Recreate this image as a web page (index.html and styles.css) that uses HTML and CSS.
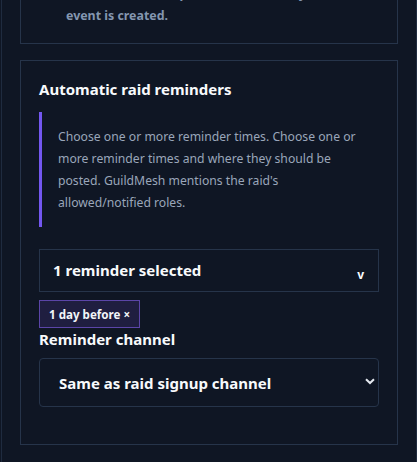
FILE: index.html
```html
<!DOCTYPE html>
<html lang="en">
<head>
<meta charset="utf-8">
<title>Raid reminders</title>
<link rel="stylesheet" href="styles.css">
</head>
<body>
<div class="panel">
  <section class="card card-top">
    <p class="hint">Leave unticked to publish immediately when the event is created.</p>
  </section>
  <section class="card card-main">
    <h3 class="title">Automatic raid reminders</h3>
    <blockquote class="note">Choose one or more reminder times. Choose one or more reminder times and where they should be posted. GuildMesh mentions the raid's allowed/notified roles.</blockquote>
    <div class="multiselect">
      <span class="ms-text">1 reminder selected</span>
      <span class="ms-caret">v</span>
    </div>
    <div class="chips">
      <span class="chip">1 day before ×</span>
    </div>
    <label class="label">Reminder channel</label>
    <div class="select">
      <span class="select-text">Same as raid signup channel</span>
      <svg class="chevron" width="10" height="7" viewBox="0 0 10 7"><path d="M1 1.2 L5 5 L9 1.2" fill="none" stroke="#e5e9f0" stroke-width="2"/></svg>
    </div>
  </section>
</div>
</body>
</html>
```
FILE: styles.css
```css
html, body {
  margin: 0;
  padding: 0;
  background: #0f1624;
  overflow: hidden;
}
body {
  font-family: "Noto Sans", "Open Sans", sans-serif;
  color: #f1f5f9;
}
.panel {
  display: flow-root;
  margin-left: 1px;
  width: 416px;
  box-sizing: border-box;
  height: 462px;
  border-left: 1px solid #1f2b3f;
  border-right: 1px solid #1f2b3f;
  padding: 0 18px;
}
.card {
  border: 1px solid #26344a;
  box-sizing: border-box;
  width: 378px;
}
.card-top {
  margin-top: -18px;
  padding: 0 18px 16px;
}
.hint {
  margin: 0 0 0 27px;
  font-size: 12.4px;
  line-height: 22px;
  font-weight: 700;
  color: #8496b0;
}
.card-main {
  margin-top: 16px;
  padding: 18px 18px 37px;
}
.title {
  margin: 0 0 13px;
  font-size: 15px;
  line-height: 20px;
  font-weight: 700;
  color: #f8fafc;
}
.note {
  margin: 0 0 22px;
  border-left: 3px solid #7357f0;
  padding: 14px 16px 13px 16px;
  font-size: 12.2px;
  line-height: 22px;
  color: #9aa6ba;
}
.multiselect {
  height: 43px;
  box-sizing: border-box;
  border: 1px solid #26344a;
  display: flex;
  justify-content: space-between;
  align-items: center;
  padding: 0 14px 0 13px;
}
.ms-text {
  font-size: 15px;
  font-weight: 700;
  color: #f8fafc;
  padding-bottom: 2px;
}
.ms-caret {
  font-size: 12px;
  font-weight: 700;
  color: #f8fafc;
  padding-top: 8px;
}
.chips {
  margin-top: 8px;
  display: flex;
}
.chip {
  height: 28px;
  box-sizing: border-box;
  display: inline-flex;
  align-items: center;
  padding: 0 9px;
  background: #1f1e40;
  border: 1px solid #5b45a8;
  font-size: 11.6px;
  font-weight: 700;
  color: #f1f5f9;
}
.label {
  display: block;
  font-size: 15px;
  line-height: 22px;
  font-weight: 700;
  color: #f8fafc;
}
.select {
  margin-top: 8px;
  height: 49px;
  box-sizing: border-box;
  border: 1px solid #26344a;
  border-radius: 4px;
  display: flex;
  align-items: center;
  justify-content: space-between;
  padding: 0 3px 0 19px;
}
.select-text {
  font-size: 15px;
  font-weight: 700;
  color: #f8fafc;
}
.chevron {
  margin-bottom: 2px;
}
```
